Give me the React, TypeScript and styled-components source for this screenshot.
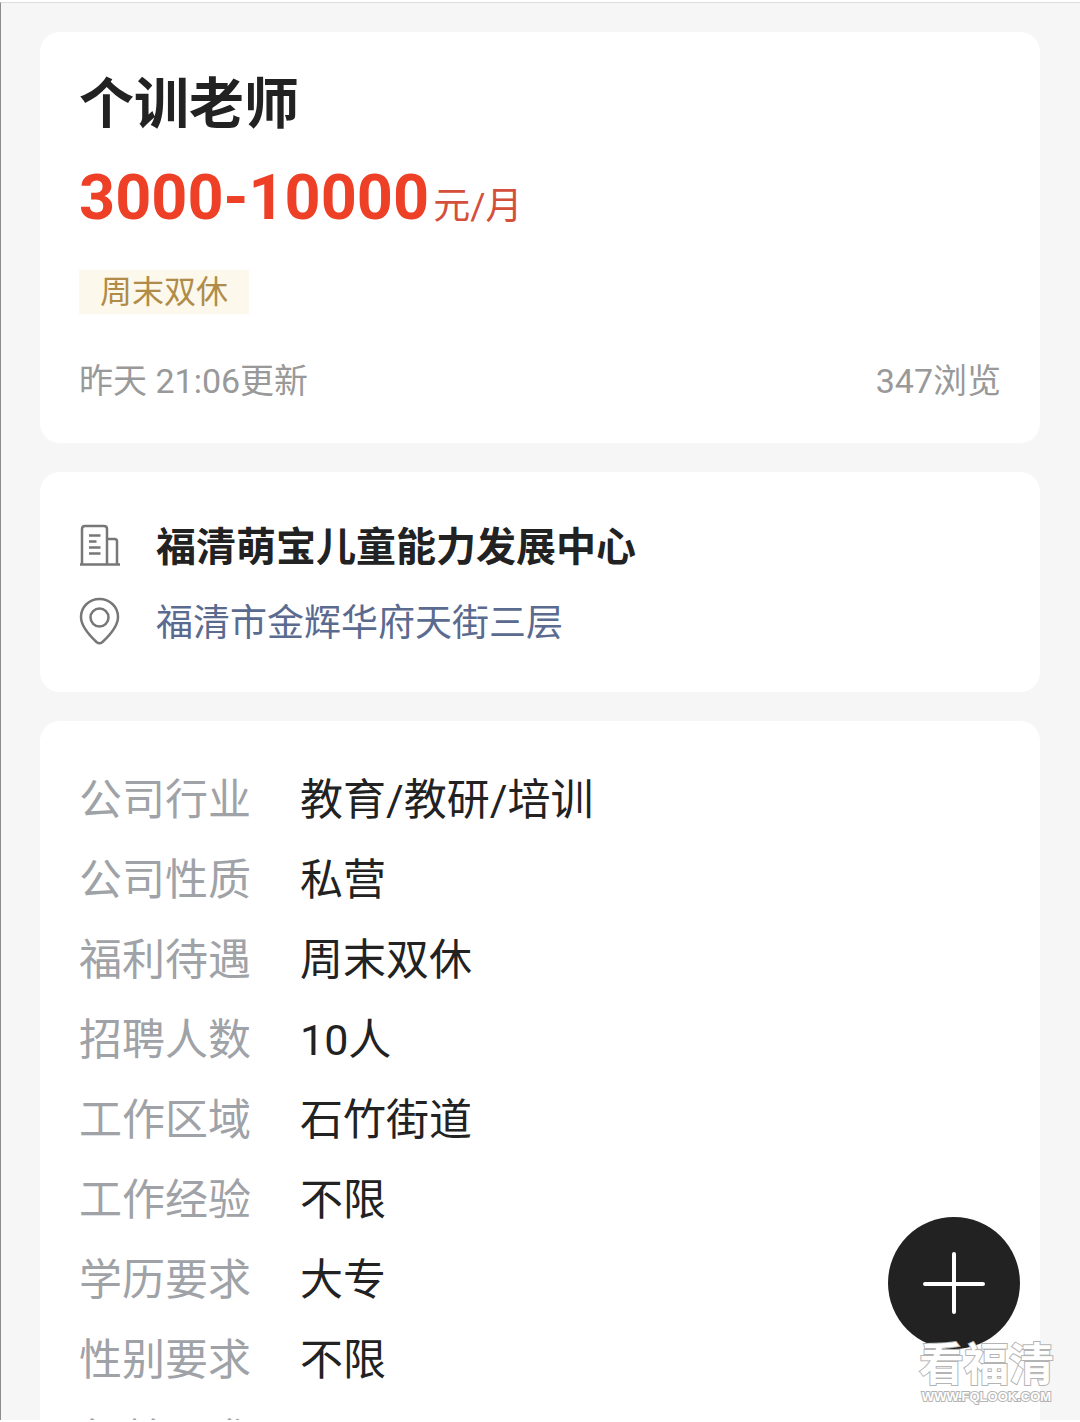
import React from 'react';
import styled, { createGlobalStyle } from 'styled-components';

const GlobalStyle = createGlobalStyle`
  * { box-sizing: border-box; }
  body {
    margin: 0;
    background: #fff;
    color: #222;
    font-family: Roboto, "Noto Sans CJK SC", sans-serif;
  }
  h1, h2, p, dl, dd { margin: 0; }
`;

const Screen = styled.div`
  position: relative;
  height: 100vh;
  overflow: hidden;
  padding: 2px 0;
`;

const Page = styled.main`
  display: flex;
  flex-direction: column;
  gap: 29px;
  height: 100%;
  overflow: hidden;
  padding: 29px 40px 0 39px;
  border-top: 1px solid #dcdcdc;
  border-left: 1px solid #8c8c8c;
  background: #f6f6f6;
`;

const Card = styled.section<{ $pad: string }>`
  flex: none;
  padding: ${(p) => p.$pad};
  border-radius: 20px;
  background: #fff;
`;

const Title = styled.h1`
  font-size: 55px;
  line-height: 80px;
  font-weight: 700;
`;

const Salary = styled.p`
  display: flex;
  align-items: baseline;
  gap: 4px;
  margin-top: 14px;
  line-height: 80px;
  color: #ee3f27;
`;

const Amount = styled.strong`
  font-size: 63px;
  font-weight: 700;
`;

const Unit = styled.span`
  font-size: 37px;
  color: #d5503c;
`;

const Tag = styled.span`
  display: block;
  width: fit-content;
  margin-top: 23px;
  padding: 0 21px;
  font-size: 32px;
  line-height: 44px;
  color: #b08c48;
  background: #fcf8ec;
`;

const Meta = styled.div`
  display: flex;
  justify-content: space-between;
  margin-top: 43px;
  font-size: 34px;
  line-height: 48px;
  color: #999;
`;

const InfoRow = styled.div`
  display: flex;
  align-items: center;
  gap: 36px;
  height: 76px;
`;

const Company = styled.h2`
  padding-top: 4px;
  font-size: 40px;
  line-height: 60px;
  font-weight: 700;
`;

const Address = styled.a`
  padding-top: 4px;
  font-size: 37px;
  line-height: 60px;
  color: #5b6b90;
  text-decoration: none;
`;

const Details = styled.dl`
  display: grid;
  grid-template-columns: 172px 1fr;
  column-gap: 49px;
  grid-auto-rows: 80px;
  font-size: 43px;
  line-height: 80px;
`;

const Label = styled.dt`
  color: #9fa2a7;
  white-space: nowrap;
`;

const AddButton = styled.button`
  position: absolute;
  right: 60px;
  bottom: 73px;
  display: grid;
  place-items: center;
  width: 132px;
  height: 132px;
  padding: 0;
  border: 0;
  border-radius: 50%;
  background: #222;
`;

const Watermark = styled.div`
  position: absolute;
  right: 26px;
  bottom: 17px;
  display: flex;
  flex-direction: column;
  align-items: center;
  color: #fff;
  font-weight: 700;
  pointer-events: none;
  paint-order: stroke fill;
  -webkit-text-stroke: 2px #b4b4b4;
`;

const WatermarkName = styled.span`
  font-size: 45px;
  line-height: 46px;
`;

const WatermarkUrl = styled.span`
  font-family: "Liberation Sans", Arial, sans-serif;
  font-size: 13px;
  line-height: 16px;
  font-weight: 700;
`;

const BuildingIcon = () => (
  <svg width="41" height="48" viewBox="0 0 41 48" fill="none" stroke="#777" strokeWidth="2.500" aria-hidden="true">
    <path d="M3 42V7Q3 4 6 4H25Q28 4 28 7V42" />
    <path d="M28 17H35.500Q38 17 38 19.500V42" />
    <path d="M1 42.500H41M10 13.500H21.500M10 19.500H17.500M10 25.500H21.500M10 31.500H21.500" />
  </svg>
);

const PinIcon = () => (
  <svg width="41" height="50" viewBox="0 0 41 50" fill="none" stroke="#777" strokeWidth="2.500" aria-hidden="true">
    <path d="M20.500 2C10 2 2 10 2 20C2 29 10 38 17.500 45Q20.500 47.500 23.500 45C31 38 39 29 39 20C39 10 31 2 20.500 2Z" />
    <circle cx="20.500" cy="20.500" r="9" />
  </svg>
);

const details = [
  ['公司行业', '教育/教研/培训'],
  ['公司性质', '私营'],
  ['福利待遇', '周末双休'],
  ['招聘人数', '10人'],
  ['工作区域', '石竹街道'],
  ['工作经验', '不限'],
  ['学历要求', '大专'],
  ['性别要求', '不限'],
  ['年龄要求', ''],
];

export default function App() {
  return (
    <Screen>
      <GlobalStyle />
      <Page>
        <Card $pad="32px 39px 38px">
          <Title>个训老师</Title>
          <Salary>
            <Amount>3000-10000</Amount>
            <Unit>元/月</Unit>
          </Salary>
          <Tag>周末双休</Tag>
          <Meta>
            <span>昨天 21:06更新</span>
            <span>347浏览</span>
          </Meta>
        </Card>
        <Card $pad="36px 39px 32px">
          <InfoRow>
            <BuildingIcon />
            <Company>福清萌宝儿童能力发展中心</Company>
          </InfoRow>
          <InfoRow>
            <PinIcon />
            <Address href="#map">福清市金辉华府天街三层</Address>
          </InfoRow>
        </Card>
        <Card $pad="39px 39px 40px">
          <Details>
            {details.map(([label, value]) => (
              <React.Fragment key={label}>
                <Label>{label}</Label>
                <dd>{value}</dd>
              </React.Fragment>
            ))}
          </Details>
        </Card>
      </Page>
      <AddButton type="button" aria-label="添加">
        <svg width="64" height="64" viewBox="0 0 64 64" stroke="#fff" strokeWidth="4" strokeLinecap="round" aria-hidden="true">
          <path d="M32 3V61M3 33H61" />
        </svg>
      </AddButton>
      <Watermark>
        <WatermarkName>看福清</WatermarkName>
        <WatermarkUrl>WWW.FQLOOK.COM</WatermarkUrl>
      </Watermark>
    </Screen>
  );
}
